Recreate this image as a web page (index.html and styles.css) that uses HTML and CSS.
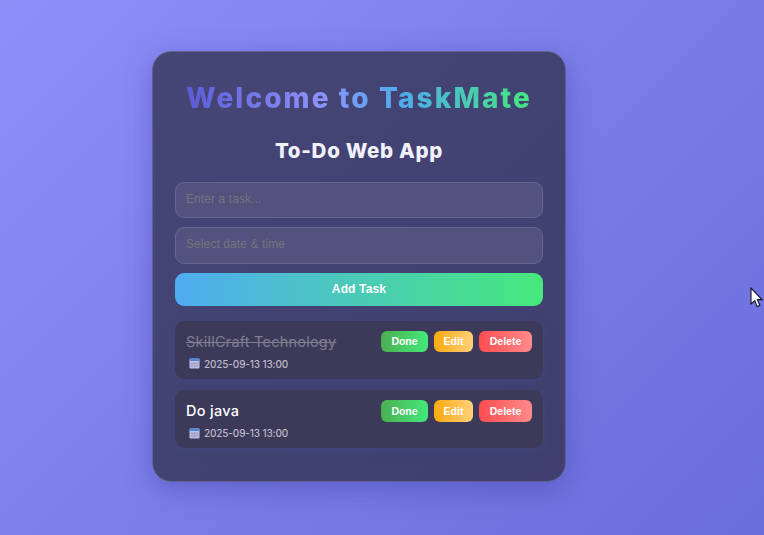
FILE: index.html
```html
<!DOCTYPE html>
<html lang="en">
<head>
<meta charset="utf-8">
<title>TaskMate</title>
<link rel="stylesheet" href="styles.css">
</head>
<body>
<main class="card">
  <h1 class="brand"><span>Welcome to TaskMate</span></h1>
  <h2 class="subtitle"><span>To-Do Web App</span></h2>
  <form class="task-form">
    <input class="field" type="text" placeholder="Enter a task...">
    <input class="field field-date" type="text" placeholder="Select date &amp; time">
    <button class="add" type="button">Add Task</button>
  </form>
  <ul class="tasks">
    <li class="task completed">
      <div class="info">
        <span class="name">SkillCraft Technology</span>
        <span class="due">
          <svg class="calendar" viewBox="0 0 11 11"><rect x=".5" y=".5" width="10" height="10" rx="1" fill="#c3bfe0"/><path d="M.5 3V1.5a1 1 0 0 1 1-1h8a1 1 0 0 1 1 1V3z" fill="#4a88d8"/><path d="M3 4v5.500M5.500 4v5.500M8 4v5.500M1.500 5.500h8M1.500 7.700h8" stroke="#8f8fc0" stroke-width=".6"/></svg>
          <span class="date">2025-09-13 13:00</span>
        </span>
      </div>
      <div class="actions">
        <button class="done" type="button">Done</button>
        <button class="edit" type="button">Edit</button>
        <button class="delete" type="button">Delete</button>
      </div>
    </li>
    <li class="task">
      <div class="info">
        <span class="name">Do java</span>
        <span class="due">
          <svg class="calendar" viewBox="0 0 11 11"><rect x=".5" y=".5" width="10" height="10" rx="1" fill="#c3bfe0"/><path d="M.5 3V1.5a1 1 0 0 1 1-1h8a1 1 0 0 1 1 1V3z" fill="#4a88d8"/><path d="M3 4v5.500M5.500 4v5.500M8 4v5.500M1.500 5.500h8M1.500 7.700h8" stroke="#8f8fc0" stroke-width=".6"/></svg>
          <span class="date">2025-09-13 13:00</span>
        </span>
      </div>
      <div class="actions">
        <button class="done" type="button">Done</button>
        <button class="edit" type="button">Edit</button>
        <button class="delete" type="button">Delete</button>
      </div>
    </li>
  </ul>
</main>
<svg class="cursor" viewBox="0 0 13 21"><path d="M1 1v16l3.700-3.400 2.500 6 2.700-1.100-2.500-5.900H12z" fill="#fff" stroke="#111126" stroke-width="1.100"/></svg>
</body>
</html>
```
FILE: styles.css
```css
* {
  box-sizing: border-box;
}

body {
  margin: 0;
  height: 535px;
  padding: 51px 0 0 152px;
  overflow: hidden;
  background: linear-gradient(135deg, #8e8ff9 0%, #696cdb 100%);
  font-family: Inter, sans-serif;
  color: #fff;
}

.card {
  width: 414px;
  height: 431px;
  padding: 0 22px;
  border: 1px solid #62618c;
  border-radius: 19px;
  background: linear-gradient(135deg, #454675, #403f70);
  box-shadow: 0 7px 28px rgba(45, 45, 140, 0.35);
}

.brand,
.subtitle {
  margin: 0;
  text-align: center;
  white-space: nowrap;
}

.brand {
  padding-top: 25px;
  height: 76px;
  font-size: 28px;
  font-weight: 800;
  line-height: 43px;
  letter-spacing: 2.1px;
}

.brand span {
  background: linear-gradient(90deg, #5b5bd6, #8f90fa 38%, #4facee 62%, #43e97b);
  background-clip: text;
  -webkit-background-clip: text;
  color: transparent;
}

.subtitle {
  height: 53.5px;
  font-size: 20.5px;
  font-weight: 800;
  line-height: 45px;
  letter-spacing: 0.7px;
  color: #f2f1fb;
}

.task-form {
  display: flex;
  flex-direction: column;
}

.field {
  height: 36px;
  margin: 0 0 9px;
  padding: 0 10px 2px;
  border: 1px solid #66668f;
  border-radius: 9px;
  background: #53527e;
  font: 12px "Liberation Sans", sans-serif;
  letter-spacing: 0.09px;
  color: #fff;
}

.field-date {
  height: 37px;
  padding-bottom: 3px;
}

.field::placeholder {
  color: #74747c;
  opacity: 1;
}

.add {
  height: 33.5px;
  padding-bottom: 1px;
  border: 0;
  border-radius: 9px;
  background: linear-gradient(90deg, #4facf2, #46e97c);
  font: bold 12px "Liberation Sans", sans-serif;
  letter-spacing: 0.15px;
  color: #fff;
}

.tasks {
  display: flex;
  flex-direction: column;
  gap: 11.5px;
  margin: 14.5px 0 0;
  padding: 0;
  list-style: none;
}

.task {
  display: flex;
  justify-content: space-between;
  height: 58px;
  padding: 10px 11px;
  border-radius: 9px;
  background: #3c3959;
  box-shadow: 0 2px 8px rgba(70, 80, 150, 0.35);
}

.info {
  display: flex;
  flex-direction: column;
}

.name {
  font-size: 14.5px;
  font-weight: 500;
  line-height: 21px;
  letter-spacing: 0.3px;
}

.completed .name {
  color: #807e92;
  font-weight: 400;
  letter-spacing: 0.22px;
  text-decoration: line-through;
}

.due {
  display: flex;
  flex-shrink: 0;
  align-items: center;
  gap: 4px;
  height: 22px;
  margin-top: 1px;
  padding-left: 3px;
  font-size: 10px;
  font-weight: 500;
  letter-spacing: -0.15px;
  color: #bbb9ca;
}

.calendar {
  width: 11px;
  height: 11px;
}

.actions {
  display: flex;
  gap: 6px;
}

.actions button {
  height: 21.5px;
  padding: 0;
  border: 0;
  border-radius: 6px;
  font: bold 10.5px "Liberation Sans", sans-serif;
  color: #fff;
}

.actions .done {
  width: 47px;
  background: linear-gradient(90deg, #4caf50, #43e97b);
}

.actions .edit {
  width: 39px;
  background: linear-gradient(90deg, #ffa90d, #ffd07a);
}

.actions .delete {
  width: 53px;
  background: linear-gradient(90deg, #ff4d50, #ff8a8b);
}

.cursor {
  position: absolute;
  left: 750px;
  top: 287px;
  width: 13px;
  height: 21px;
}
```
